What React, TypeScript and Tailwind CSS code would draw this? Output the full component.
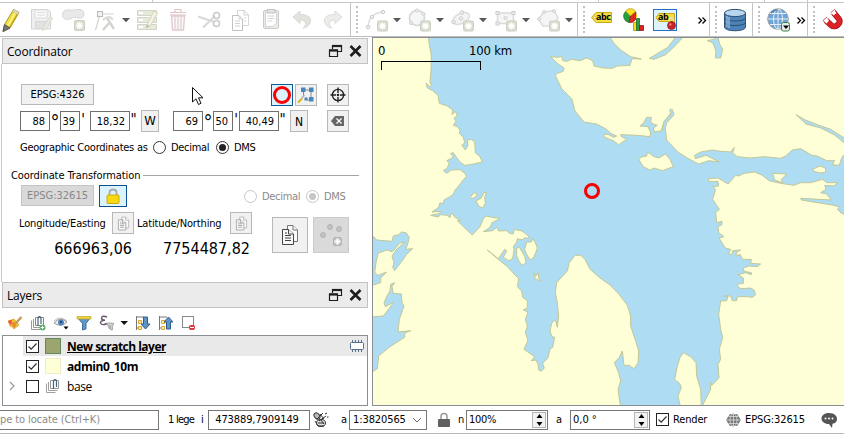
import React from "react";

type Kids = { children?: React.ReactNode };

/* ---------- small building blocks ---------- */

const Icon = ({ children, s = 24 }: Kids & { s?: number }) => (
  <svg className="shrink-0" width={s} height={s} viewBox={`0 0 ${s} ${s}`} fill="none">
    {children}
  </svg>
);

const Slot = ({ w, children }: Kids & { w: string }) => (
  <div className={`flex h-full shrink-0 items-center ${w}`}>{children}</div>
);

/* Tool that is disabled while no layer is being edited */
const Dim = ({ w, children }: Kids & { w: string }) => (
  <div className={`flex h-full shrink-0 items-center opacity-80 ${w}`}>{children}</div>
);

const Arrow = ({ w }: { w: string }) => (
  <Slot w={w}>
    <svg width="10" height="24" viewBox="0 0 10 24">
      <path d="M1 10H9L5 14.200Z" fill="#585858" />
    </svg>
  </Slot>
);

const Sep = ({ w }: { w: string }) => (
  <div className={`flex h-full shrink-0 items-center border-l border-[#c4c4c4] ${w}`}>
    <div className="ml-[5px] h-[27px] border-l-2 border-dotted border-[#c2c2c2]" />
  </div>
);

const More = ({ w }: { w: string }) => (
  <Slot w={w}>
    <svg width="10" height="24" viewBox="0 0 10 24" fill="none" stroke="#000" strokeWidth="1.300">
      <path d="M1.500 9.500L4.500 12.500L1.500 15.500M5.500 9.500L8.500 12.500L5.500 15.500" />
    </svg>
  </Slot>
);

/* "New feature" star badge shared by the digitizing icons */
const Badge = ({ x = 12.5, y = 13 }: { x?: number; y?: number }) => (
  <g transform={`translate(${x} ${y})`}>
    <rect x="0" y="0" width="10" height="10" rx="1.500" fill="#d0d6c6" stroke="#bdc5b2" />
    <path d="M5 1.500V8.500M1.500 5H8.500M2.600 2.600L7.400 7.400M7.400 2.600L2.600 7.400" stroke="#fff" strokeWidth="1.400" />
  </g>
);

/* ---------- top toolbar ---------- */

function Toolbar() {
  return (
    <div className="flex h-[37px] shrink-0 flex-col">
      <div className="flex h-[3px] border-b border-[#c8c8c8]">
        <div className="w-[153px] border-r border-[#c8c8c8]" />
        <div className="w-[446px] border-r border-[#c8c8c8]" />
        <div className="w-[166px] border-r border-[#c8c8c8]" />
        <div className="w-[43px] border-r border-[#c8c8c8]" />
      </div>
      <div className="flex h-[34px] items-center overflow-hidden border-b border-[#bdbdbd]">
        <Slot w="w-[30px]">
          <Icon>
            <path d="M3 23.500L4.500 16.500L13.500 1.500L19 4.500L10 20Z" fill="#f0dc3c" stroke="#a59a36" />
            <path d="M8 17.500L15.500 4.500" stroke="#fff27a" strokeWidth="2" />
            <path d="M10 19L17.500 6" stroke="#c0a51d" strokeWidth="1.500" />
            <path d="M3 23.500L4.500 16.500L10 20Z" fill="#777" stroke="#555" />
            <path d="M13.500 1.500L19 4.500L18 6.500L12.500 3.500Z" fill="#e8e4c0" stroke="#b4ae88" strokeWidth=".7" />
          </Icon>
        </Slot>
        <Dim w="w-[32px]">
          <Icon>
            <path d="M1.500 1.500H18L20.500 4V21H1.500Z" fill="#ececec" stroke="#cacaca" />
            <rect x="5" y="2" width="12" height="8" fill="#fafafa" stroke="#d4d4d4" />
            <path d="M7 4.500H15M7 7H15" stroke="#d4d4d4" />
            <rect x="5.500" y="13.500" width="10" height="7" fill="#dcdcdc" stroke="#cfcfcf" />
            <path d="M12.500 22.500L14 18L20 8.500L22.500 10L17 20Z" fill="#e6e6de" stroke="#cfcfc8" />
          </Icon>
        </Dim>
        <Dim w="w-[32px]">
          <Icon>
            <path d="M1 9C-1 4 3 1.500 7 2C11 3 14 1 18 1.500C23 2 23 9 19 10C15 11 13 8 10 10C7 12 2 12 1 9Z" fill="#e4e4e4" stroke="#cdcdcd" />
            <Badge x={12.5} y={12.5} />
          </Icon>
        </Dim>
        <Dim w="w-[27px]">
          <Icon>
            <path d="M1.500 22L6 6H20" stroke="#c6cbc2" strokeWidth="1.200" />
            <rect x="3.500" y="3.500" width="5" height="5" fill="#eee" stroke="#a8a8a8" />
            <path d="M9 22L16 14M13 10L20 21" stroke="#c9cdc4" strokeWidth="2.500" />
            <path d="M9 12Q15 6 19 12" stroke="#d3d3d3" strokeWidth="2" />
          </Icon>
        </Dim>
        <Arrow w="w-[14px]" />
        <Dim w="w-[33px]">
          <Icon>
            <g fill="#dfe5d3" stroke="#c6ccb9">
              <path d="M2.500 2.500H21.500V7.500H2.500ZM2.500 9.500H21.500V14.500H2.500ZM2.500 16.500H21.500V21.500H2.500Z" />
            </g>
            <path d="M8 5H4M8 12H4M8 19H4" stroke="#fff" strokeWidth="2" />
            <path d="M11 20L12.500 16L19 3L22.500 5L15.500 17.500Z" fill="#f4f1d8" stroke="#cdc9b4" />
            <path d="M11 20L12 16.500L15 18Z" fill="#aaa" />
          </Icon>
        </Dim>
        <Dim w="w-[30px]">
          <Icon>
            <path d="M7 4V1.500H13V4M2 4.500H18" stroke="#d9b6b8" strokeWidth="1.200" />
            <path d="M3.500 8H16.500L15.500 22H4.500Z" fill="#faf6f6" stroke="#d9bcbf" strokeWidth="1.300" />
            <path d="M7 9V21M10 9V21M13 9V21" stroke="#d8c4c6" strokeWidth="1.200" />
            <path d="M2 7H18" stroke="#d9bcbf" strokeWidth="1.200" />
          </Icon>
        </Dim>
        <Dim w="w-[32px]">
          <Icon>
            <path d="M0 8.500L16 14M5 19.500L17 8" stroke="#cfcfcf" strokeWidth="2" />
            <circle cx="18.500" cy="7.500" r="3" stroke="#bdbdbd" strokeWidth="1.500" />
            <circle cx="18.500" cy="15.500" r="3" stroke="#bdbdbd" strokeWidth="1.500" />
          </Icon>
        </Dim>
        <Dim w="w-[31px]">
          <Icon>
            <path d="M7.500 2.500H14L18.500 6.500V17.500H7.500Z" fill="#fff" stroke="#ccc" />
            <path d="M2.500 7.500H9L12.500 11V22.500H2.500Z" fill="#fff" stroke="#b4b4b4" />
            <path d="M9 7.500V11H12.500M14 3V7H18M5 13H10M5 15.500H10M5 18H10M14 10H16M14 13H16" stroke="#c6c6c6" />
          </Icon>
        </Dim>
        <Dim w="w-[31px]">
          <Icon>
            <rect x="2.500" y="2.500" width="15" height="18" rx="1.500" fill="#e8e8e0" stroke="#bfbfb7" />
            <path d="M4.500 4.500H15.500V15L12 18.500H4.500Z" fill="#fff" stroke="#c8c8c8" />
            <path d="M6 1.500H14V5H6Z" fill="#ddd" stroke="#b4b4b4" />
            <path d="M6.500 8H13.500M6.500 10.500H13.500M6.500 13H11" stroke="#ccc" />
          </Icon>
        </Dim>
        <Dim w="w-[31px]">
          <Icon>
            <path d="M1 9L8 3V6.500C15 6.500 19 9 18.500 13C18 17 15 19.500 11 20C15 17 15 12 8 12V15.500Z" fill="#dcdcd7" stroke="#cfcfc9" />
          </Icon>
        </Dim>
        <Dim w="w-[27px]">
          <Icon>
            <path d="M19 9L12 3V6.500C5 6.500 1 9 1.500 13C2 17 5 19.500 9 20C5 17 5 12 12 12V15.500Z" fill="#e9e9e5" stroke="#d0d5cc" />
          </Icon>
        </Dim>
        <Sep w="w-[15px]" />
        <Dim w="w-[27px]">
          <Icon>
            <path d="M3 19Q4 5 18 4" stroke="#d4d9d6" strokeWidth="1.500" />
            <g fill="#eee" stroke="#bdbdbd">
              <circle cx="3" cy="19" r="1.700" />
              <circle cx="7" cy="9" r="1.700" />
              <circle cx="18" cy="4" r="1.700" />
            </g>
            <Badge />
          </Icon>
        </Dim>
        <Arrow w="w-[16px]" />
        <Dim w="w-[27px]">
          <Icon>
            <circle cx="9" cy="10" r="7.500" fill="#f5f5f5" stroke="#d2d6d4" strokeWidth="2" />
            <g fill="#eee" stroke="#c4c4c4">
              <circle cx="9" cy="2.500" r="1.500" />
              <circle cx="3" cy="15" r="1.500" />
              <circle cx="15.500" cy="6" r="1.500" />
            </g>
            <Badge />
          </Icon>
        </Dim>
        <Arrow w="w-[16px]" />
        <Dim w="w-[27px]">
          <Icon>
            <ellipse cx="10" cy="10.500" rx="9" ry="5" transform="rotate(-25 10 10.500)" fill="#f1f1f1" stroke="#d2d6d4" strokeWidth="1.500" />
            <g fill="#eee" stroke="#bdbdbd">
              <circle cx="10" cy="10.500" r="1.700" />
              <circle cx="11" cy="4.500" r="1.700" />
              <circle cx="2.500" cy="14" r="1.700" />
            </g>
            <Badge />
          </Icon>
        </Dim>
        <Arrow w="w-[16px]" />
        <Dim w="w-[27px]">
          <Icon>
            <rect x="3.500" y="5" width="16" height="10.500" fill="#f3f3f3" stroke="#d0d5d2" strokeWidth="1.500" />
            <g fill="#eee" stroke="#c0c0c0">
              <rect x="2" y="3.500" width="3" height="3" />
              <rect x="18" y="3.500" width="3" height="3" />
              <rect x="2" y="14" width="3" height="3" />
              <circle cx="11.500" cy="10" r="1.500" />
            </g>
            <Badge />
          </Icon>
        </Dim>
        <Arrow w="w-[16px]" />
        <Dim w="w-[27px]">
          <Icon>
            <path d="M7 4L17 2.500L21 10L15 18H6L1.500 11Z" fill="#f3f3f3" stroke="#d2d6d4" strokeWidth="1.500" />
            <g fill="#eee" stroke="#c4c4c4">
              <circle cx="7" cy="4" r="1.500" />
              <circle cx="17" cy="3" r="1.500" />
              <circle cx="2" cy="11" r="1.500" />
            </g>
            <Badge />
          </Icon>
        </Dim>
        <Arrow w="w-[13px]" />
        <Sep w="w-[14px]" />
        <Slot w="w-[31px]">
          <div className="relative flex h-6 w-6 items-center">
            <svg width="24" height="24" viewBox="0 0 24 24">
              <path d="M.5 9.500L5 4.500H20.500V14.500H5Z" fill="#f6dc3f" stroke="#c8a915" />
              <circle cx="3.500" cy="9.500" r="1" fill="#fff" stroke="#b99b18" strokeWidth=".5" />
            </svg>
            <span className="absolute left-[5px] top-[3px] font-['Open_Sans',sans-serif] text-[9px] font-bold leading-[12px] tracking-[-0.5px] text-black">abc</span>
          </div>
        </Slot>
        <Slot w="w-[31px]">
          <Icon>
            <circle cx="8.500" cy="8" r="6.500" fill="#ffe426" />
            <path d="M8.500 8L3.500 3.500A6.500 6.500 0 0 0 7 14.500Z" fill="#1fa33b" stroke="#2d6c34" strokeWidth=".7" />
            <path d="M8.500 8L7 14.500A6.500 6.500 0 0 0 13.500 11.500L14 4Z" fill="#e12525" stroke="#8d1d1d" strokeWidth=".7" />
            <path d="M8.500 8L3.500 3A6.500 6.500 0 0 1 13.500 3Z" fill="#ffe426" stroke="#b99a14" strokeWidth=".8" />
            <path d="M11.500 14.500H14.500V22.500H11.500Z" fill="#f5e11f" stroke="#9f8c15" strokeWidth=".8" />
            <path d="M14.500 10.500H17.500V22.500H14.500Z" fill="#2f9c44" stroke="#226b31" strokeWidth=".8" />
            <path d="M17.500 17.500H21.500V22.500H17.500Z" fill="#de2222" stroke="#8d1616" strokeWidth=".8" />
          </Icon>
        </Slot>
        <Slot w="w-[44px]">
          <div className="relative h-[22px] w-6 border border-[#2371c9] bg-[#ddf2fb]">
            <svg width="22" height="20" viewBox="0 0 22 20">
              <path d="M2 7.500L5 3.500H20.500V11.500H5Z" fill="#f6dc3f" stroke="#c8a915" />
              <path d="M15.500 13V9.500Q17.500 6 19.500 9.500V14" fill="none" stroke="#ddd" strokeWidth="1.300" />
              <circle cx="17.500" cy="15.500" r="4" fill="#c92327" stroke="#8a1517" strokeWidth=".7" />
              <circle cx="16.300" cy="14.500" r="1.200" fill="#ee7c7d" />
            </svg>
            <span className="absolute left-[4px] top-px font-['Open_Sans',sans-serif] text-[9px] font-bold leading-[12px] tracking-[-0.5px] text-black">ab</span>
          </div>
        </Slot>
        <More w="w-[12px]" />
        <Sep w="w-[14px]" />
        <Slot w="w-[29px]">
          <Icon>
            <path d="M1.500 5V19C1.500 24 22.500 24 22.500 19V5Z" fill="#4e83b8" stroke="#2d5378" />
            <ellipse cx="12" cy="5" rx="10.500" ry="3.600" fill="#b9d4ec" stroke="#2d5378" />
            <path d="M1.500 10C1.500 14 22.500 14 22.500 10M1.500 14.500C1.500 18.500 22.500 18.500 22.500 14.500" stroke="#284d72" />
            <path d="M4 8V19M6 9V20" stroke="#8db3d8" strokeWidth="1.500" />
          </Icon>
        </Slot>
        <Sep w="w-[14px]" />
        <Slot w="w-[30px]">
          <Icon>
            <circle cx="12" cy="11" r="10.300" fill="#6ea5d6" stroke="#a0a0a0" />
            <ellipse cx="12" cy="11" rx="4.500" ry="10" stroke="#e7f1fa" />
            <path d="M12 1V21M2 11H22M4 5.500H20M4 16.500H20" stroke="#e7f1fa" />
            <path d="M5 5Q8 1.500 12 2" stroke="#5c88b4" strokeWidth="1.500" />
            <rect x="15.500" y="14.500" width="8" height="8.500" rx="2" fill="#e6efe4" stroke="#3d7b47" />
            <path d="M17 17.500H23L20 21Z" fill="#000" />
          </Icon>
        </Slot>
        <More w="w-[11px]" />
        <Sep w="w-[15px]" />
        <Slot w="w-[22px]">
          <Icon>
            <path d="M4 12.500L9.500 17.500C13 20.500 20 15 17 11L11.500 4.500" stroke="#9c1518" strokeWidth="6" />
            <path d="M4 12.500L9.500 17.500C13 20.500 20 15 17 11L11.500 4.500" stroke="#dc2228" strokeWidth="4.500" />
            <path d="M3 11.500L5.800 14M10.500 3.200L13 6.200" stroke="#fff" strokeWidth="4" />
            <path d="M5 9L1 12.500L3.500 15.500M8.500 5L12.500 1.500L15 4.500" stroke="#c33" strokeWidth=".8" />
          </Icon>
        </Slot>
      </div>
    </div>
  );
}

/* ---------- dock panels ---------- */

const DockTitle = ({ children }: Kids) => (
  <div className="ml-[2px] flex h-[26px] w-[366px] shrink-0 items-center border border-[#c3c3c3] bg-[#ebebeb] pl-1">
    <span className="flex-1 pt-px font-['Open_Sans',sans-serif] text-[12px] leading-4 tracking-[-0.2px]">{children}</span>
    <svg className="mr-1" width="36" height="16" viewBox="0 0 36 16" fill="none" stroke="#1e1e1e">
      <path d="M5.500 6V2.500H14.500V8.500H10" strokeWidth="1.200" />
      <path d="M5 3H15" strokeWidth="2.200" />
      <path d="M2.500 7H10.500V13.500H2.500Z" strokeWidth="1.200" fill="#ebebeb" />
      <path d="M2 7.500H11" strokeWidth="2.200" />
      <path d="M23.500 3L33.500 13M33.500 3L23.500 13" strokeWidth="2.600" />
    </svg>
  </div>
);

const Field = ({ w, children }: Kids & { w: string }) => (
  <div className={`flex h-[20px] shrink-0 items-center justify-end border border-[#6f6f6f] bg-white pr-[4px] pt-[2px] ${w}`}>{children}</div>
);

const Unit = ({ w, children }: Kids & { w: string }) => (
  <span className={`shrink-0 self-start text-center text-[15px] leading-[20px] ${w}`}>{children}</span>
);

const Degree = () => (
  <span className="flex w-[10px] shrink-0 justify-center self-start overflow-visible pt-[2px] text-[20px] leading-[20px]">°</span>
);

const Btn = ({ c, children }: Kids & { c: string }) => (
  <div className={`flex shrink-0 items-center justify-center border ${c}`}>{children}</div>
);

const Radio = ({ on, dim }: { on?: boolean; dim?: boolean }) => (
  <div className={`flex h-[13px] w-[13px] shrink-0 items-center justify-center rounded-full border bg-white ${dim ? "border-[#c6c6c6]" : "border-[#333]"}`}>
    {on && <div className={`h-[7px] w-[7px] rounded-full ${dim ? "bg-[#c6c6c6]" : "bg-[#222]"}`} />}
  </div>
);

const CopyGlyph = ({ s, dim }: { s: number; dim?: boolean }) => (
  <svg width={s} height={s} viewBox="0 0 20 22" fill="#f8f8f8" stroke={dim ? "#8e8e8e" : "#444"}>
    <path d="M7.500 1.500H13L17.500 6V17.500H7.500Z" stroke={dim ? "#a8a8a8" : "#777"} />
    <path d="M13 1.500V6H17.500" stroke={dim ? "#a8a8a8" : "#777"} />
    <path d="M2.500 5.500H8.500L13.500 10V20.500H2.500Z" />
    <path d="M8.500 5.500V10H13.500M5 11.500H11M5 14H11M5 16.500H11M5 9H7" />
  </svg>
);

const grey = "border-[#b8b8b8] bg-[#f1f1f1]";

function Coordinator() {
  return (
    <div className="ml-px flex h-[218px] w-[367px] shrink-0 flex-col border-l border-[#c9c9c9] text-[11px] leading-[14px]">
      <div className="relative ml-[19px] mt-[20px] flex h-[22px]">
        <Btn c={`h-[21px] w-[73px] ${grey}`}>
          <span className="pt-px tracking-[-0.1px]">EPSG:4326</span>
        </Btn>
        <svg className="absolute left-[170px] top-[2px]" width="14" height="20" viewBox="0 0 14 20">
          <path d="M1.500 1.500V16L5 12.800L7.500 18.500L10 17.300L7.500 11.800H12Z" fill="#fff" stroke="#111" />
        </svg>
        <Btn c="ml-[177px] h-[22px] w-[22px] border-[#0d5a9c] bg-[#dbf3fd]">
          <div className="h-[18px] w-[18px] rounded-full border-[3px] border-[#fa0000]" />
        </Btn>
        <Btn c={`ml-[2px] h-[22px] w-[22px] ${grey}`}>
          <svg width="18" height="18" viewBox="0 0 18 18" fill="#4785bd">
            <path d="M6 4H14M14 4.500V14M10 14H14M6.500 5V11" fill="none" stroke="#888" />
            <path d="M4 1.500H8.500V6H4ZM12 1.500H16.500V6H12ZM12 11H16.500V15.500H12ZM7.500 11.500H10.500V14.500H7.500Z" />
            <path d="M1 16.500L5 12.500" stroke="#d9b31e" strokeWidth="2" />
            <path d="M4.500 12.500L7.500 9" stroke="#b5b5b5" strokeWidth="1.500" />
          </svg>
        </Btn>
        <Btn c={`ml-[10px] h-[22px] w-[22px] ${grey}`}>
          <svg width="18" height="18" viewBox="0 0 18 18" fill="none" stroke="#222" strokeWidth="1.400">
            <circle cx="9" cy="9" r="5.600" />
            <path d="M9 1.500V7M9 11V16.500M1.500 9H7M11 9H16.500" />
            <circle cx="9" cy="9" r=".6" />
          </svg>
        </Btn>
      </div>
      <div className="ml-[18px] mt-[4px] flex h-[22px] items-center">
        <Field w="w-[30px]">88</Field>
        <Degree />
        <Field w="w-[20px]">39</Field>
        <Unit w="w-[10px] pr-1">'</Unit>
        <Field w="w-[40px]">18,32</Field>
        <Unit w="w-[11px] pr-1">"</Unit>
        <Btn c={`h-[22px] w-[18px] text-[13px] ${grey}`}>W</Btn>
        <div className="w-[14px]" />
        <Field w="w-[30px]">69</Field>
        <Degree />
        <Field w="w-[20px]">50</Field>
        <Unit w="w-[6px]">'</Unit>
        <Field w="w-[40px]">40,49</Field>
        <Unit w="w-[11px] pr-1">"</Unit>
        <Btn c={`h-[22px] w-[18px] pt-px text-[12px] ${grey}`}>N</Btn>
        <Btn c={`ml-[19px] h-[22px] w-[22px] ${grey}`}>
          <svg width="14" height="12" viewBox="0 0 14 12">
            <path d="M0 6L4 1H13V11H4Z" fill="#666" />
            <path d="M5.500 3.500L10.500 8.500M10.500 3.500L5.500 8.500" stroke="#fff" strokeWidth="1.200" />
          </svg>
        </Btn>
      </div>
      <div className="ml-[18px] mt-[7px] flex h-[16px] items-center">
        <span className="w-[133px] whitespace-nowrap pt-[2px] tracking-[-0.25px]">Geographic Coordinates as</span>
        <Radio />
        <span className="ml-[5px] w-[45px] pt-[2px] tracking-[-0.3px]">Decimal</span>
        <Radio on />
        <span className="ml-[5px] pt-[2px] tracking-[-0.3px]">DMS</span>
      </div>
      <div className="ml-[9px] mt-[12px] flex h-[16px] items-center">
        <span className="w-[132px] whitespace-nowrap pt-[2px] tracking-[-0.08px]">Coordinate Transformation</span>
        <div className="h-px w-[216px] bg-[#a5a5a5]" />
      </div>
      <div className="ml-[19px] mt-[2px] flex h-[22px]">
        <Btn c="h-[21px] w-[73px] border-[#c4c4c4] bg-[#d9d9d9] text-[#888]">
          <span className="pt-px">EPSG:32615</span>
        </Btn>
        <Btn c="ml-[5px] h-[22px] w-[28px] border-[#0d4f8f] bg-[#dbf3fd]">
          <svg width="14" height="16" viewBox="0 0 14 16">
            <path d="M3.500 8V4.500Q3.500 1.500 7 1.500Q10.500 1.500 10.500 4.500V8" fill="none" stroke="#aaa" strokeWidth="1.800" />
            <rect x="1" y="7" width="12" height="8.500" rx="1" fill="#f8d90f" stroke="#ccab09" />
          </svg>
        </Btn>
        <div className="ml-[117px] flex items-center text-[#8a8a8a]">
          <Radio dim />
          <span className="ml-[5px] w-[44px] pt-[2px] tracking-[-0.3px]">Decimal</span>
          <Radio on dim />
          <span className="ml-[5px] pt-[2px] tracking-[-0.3px]">DMS</span>
        </div>
      </div>
      <div className="flex">
        <div className="flex w-[270px] flex-col">
          <div className="ml-[17px] mt-[5px] flex h-[22px] items-center">
            <span className="w-[93px] whitespace-nowrap pt-[2px] tracking-[-0.15px]">Longitude/Easting</span>
            <Btn c={`h-[22px] w-[22px] ${grey}`}><CopyGlyph s={15} dim /></Btn>
            <span className="ml-[3px] w-[93px] whitespace-nowrap pt-[2px] tracking-[-0.15px]">Latitude/Northing</span>
            <Btn c={`h-[22px] w-[22px] ${grey}`}><CopyGlyph s={15} dim /></Btn>
          </div>
          <div className="mt-[4px] flex h-[20px] items-center whitespace-nowrap text-[16px] leading-5">
            <span className="w-[130px] pt-px text-right">666963,06</span>
            <span className="w-[118px] pt-px text-right">7754487,82</span>
          </div>
        </div>
        <Btn c={`mt-[10px] h-[36px] w-[36px] ${grey}`}><CopyGlyph s={22} /></Btn>
        <Btn c="ml-[5px] mt-[10px] h-[36px] w-[36px] border-[#cbcbcb] bg-[#dadada]">
          <svg width="34" height="34" viewBox="0 0 34 34" fill="#c2c2c2" stroke="#b4b4b4">
            <circle cx="16" cy="9" r="2.500" />
            <circle cx="25" cy="11" r="2.500" />
            <circle cx="9" cy="17" r="2.500" />
            <rect x="19.500" y="19.500" width="8" height="8" rx="1.500" />
            <path d="M23.500 20.500V26.500M20.500 23.500H26.500" stroke="#fff" strokeWidth="2.200" />
          </svg>
        </Btn>
      </div>
    </div>
  );
}

const Check = ({ on }: { on?: boolean }) => (
  <div className="h-[13px] w-[13px] shrink-0 border border-[#222] bg-white">
    {on && (
      <svg className="block" width="11" height="11" viewBox="0 0 11 11" fill="none" stroke="#333" strokeWidth="1.200">
        <path d="M1.500 5.500L4.200 8.200L9.500 2.500" />
      </svg>
    )}
  </div>
);

const Group = () => (
  <Icon s={16}>
    <path d="M1.500 5.500V14.500H10.500M3.500 4V12.500H12.500" stroke="#a0a0a0" />
    <path d="M5.500 2.500H13.500V10.500H5.500Z" stroke="#999" />
    <path d="M8.500 11V4Q8.500 1.500 10 1.500T11.500 4V9" stroke="#45657e" strokeWidth="1.200" />
  </Icon>
);

function Layers() {
  return (
    <>
      <div className="ml-[7px] flex h-[27px] shrink-0 items-center pt-[2px]">
        <Slot w="w-[23px]">
          <Icon s={16}>
            <path d="M1 6L7 4L12 10L7 14Q5 11 3 11Z" fill="#f2c230" stroke="#c78b1c" strokeWidth=".6" />
            <path d="M1 6L5 5L4 10Z" fill="#e44" />
            <path d="M4 8L7 7L9 11L7 13Z" fill="#e9862a" />
            <path d="M8 9L14.500 2" stroke="#c79a55" strokeWidth="2.500" />
          </Icon>
        </Slot>
        <Slot w="w-[23px]">
          <Icon s={16}>
            <path d="M1.500 5.500V14.500H10M3.500 4V12.500H12" stroke="#999" />
            <path d="M5.500 2.500H13.500V10.500H5.500Z" stroke="#888" />
            <path d="M8 11V4Q8 1.500 9.500 1.500T11 4V9" stroke="#45657e" strokeWidth="1.200" />
            <circle cx="12.500" cy="12.500" r="3" fill="#5fae65" />
            <path d="M12.500 10.800V14.200M10.800 12.500H14.200" stroke="#fff" />
          </Icon>
        </Slot>
        <Slot w="w-[23px]">
          <Icon s={16}>
            <path d="M1 8Q7 1 14 7Q8 13 1 8Z" fill="#eee" stroke="#999" />
            <path d="M1 6Q7 0 14 6" stroke="#bbb" />
            <circle cx="8" cy="7.500" r="3" fill="#4e86bd" />
            <circle cx="8" cy="7" r="1" fill="#16324d" />
            <path d="M10.500 11.500H15.500L13 14.500Z" fill="#000" />
          </Icon>
        </Slot>
        <Slot w="w-[22px]">
          <Icon s={16}>
            <path d="M1.500 2.500H14.500L10 8.500V14L6.500 15V8.500Z" fill="#6297c8" stroke="#42719c" />
            <path d="M1 1.500H15V4H1Z" fill="#f1d33c" stroke="#b99f24" strokeWidth=".6" />
          </Icon>
        </Slot>
        <Slot w="w-[22px]">
          <Icon s={18}>
            <path d="M9 3Q4 1 3.500 4Q3.500 6 7 6.200Q2.500 6 2.500 9Q4 12 9 9.500" stroke="#67566a" strokeWidth="1.400" />
            <path d="M9 9H15.500V11L14.500 12V16H12.500V12H11.500V15L10 12Z" fill="#ccc" stroke="#999" strokeWidth=".7" />
          </Icon>
        </Slot>
        <Slot w="w-[15px]">
          <svg width="9" height="16" viewBox="0 0 9 16"><path d="M.5 6H8L4.200 10Z" fill="#111" /></svg>
        </Slot>
        <Slot w="w-[23px]">
          <Icon s={16}>
            <path d="M1.500 1V15M1.500 2H9M1.500 13H5" stroke="#777" />
            <path d="M3.500 5.500H6.500V8.500H3.500ZM3.500 11.500H6.500V14.500H3.500Z" fill="#ffe9a6" stroke="#e0a92e" />
            <path d="M8.500 2H12.500V9H15L10.500 14L6 9H8.500Z" fill="#5f94c5" stroke="#2f5f8f" />
          </Icon>
        </Slot>
        <Slot w="w-[23px]">
          <Icon s={16}>
            <path d="M1.500 1V15M1.500 2H9M1.500 13H5" stroke="#777" />
            <path d="M3.500 5.500H6.500V8.500H3.500ZM3.500 11.500H6.500V14.500H3.500Z" fill="#ffe9a6" stroke="#e0a92e" />
            <path d="M8.500 14H12.500V7H15L10.500 2L6 7H8.500Z" fill="#5f94c5" stroke="#2f5f8f" />
          </Icon>
        </Slot>
        <Icon s={16}>
          <rect x="1.500" y="1.500" width="11" height="11" stroke="#888" fill="#fff" />
          <rect x="8" y="10" width="6" height="5" rx="2" fill="#e0353f" />
          <path d="M9 12.500H13" stroke="#fff" />
        </Icon>
      </div>
      <div className="ml-[2px] flex h-[71px] w-[366px] shrink-0 flex-col border border-[#8b8f94] bg-white font-['Open_Sans',sans-serif] text-[12px] leading-4">
        <div className="ml-[20px] flex h-[20px] items-center bg-[#e9e9e9] pl-[3px]">
          <Check on />
          <div className="ml-[6px] h-4 w-4 border border-[#628a5f] bg-[#9ba56d]" />
          <span className="ml-[6px] flex-1 pt-[2px] font-bold tracking-[-0.52px] underline underline-offset-1">New scratch layer</span>
          <svg className="mr-[2px]" width="16" height="14" viewBox="0 0 16 14" fill="none" stroke="#54708c">
            <rect x="1.500" y="3.500" width="13" height="7" rx="1" fill="#fff" />
            <path d="M3.500 1V3M6.500 1V3M9.500 1V3M12.500 1V3M3.500 11V13M6.500 11V13M9.500 11V13M12.500 11V13" />
          </svg>
        </div>
        <div className="ml-[23px] flex h-[20px] items-center">
          <Check on />
          <div className="ml-[6px] h-4 w-4 border border-[#eeeec8] bg-[#feffd6]" />
          <span className="ml-[6px] pt-[2px] font-bold tracking-[-0.45px]">admin0_10m</span>
        </div>
        <div className="ml-[6px] flex h-[20px] items-center">
          <svg width="7" height="10" viewBox="0 0 7 10"><path d="M1 1L5 5L1 9" fill="none" stroke="#999" strokeWidth="1.200" /></svg>
          <div className="ml-[10px]"><Check /></div>
          <div className="ml-[6px]"><Group /></div>
          <span className="ml-[6px] pt-[2px] tracking-[-0.4px]">base</span>
        </div>
      </div>
    </>
  );
}

/* ---------- map canvas ---------- */

function MapCanvas() {
  return (
    <div className="relative min-w-0 flex-1 overflow-hidden border-b border-l border-t border-[#8a8d92] bg-[#aedcf3]">
      <svg className="block" width="471" height="367" viewBox="9 6 1413 1101" strokeWidth="3" strokeLinejoin="round">
        <g fill="#feffd6" stroke="#c2c798">
          {/* western mainland and the southern cape */}
          <path d="M0 0H175L177 20L184 60L183 100L180 140L185 148L180 152L168 142L172 156L188 164L204 178L208 202L232 210L248 222L246 236L256 226L262 240L252 246L258 256L250 268L262 272L270 282L268 292L280 304L284 320L276 328L286 342L294 328L292 312L304 310L314 318L316 350L330 362L337 378L310 384L284 388L270 378L258 362L250 350L242 352L250 364L230 374L238 380L232 396L220 404L230 412L244 402L270 401L285 412L289 422L276 436L266 450L254 464L250 474L240 482L222 492L220 504L210 500L205 515L186 528L212 526L208 533L182 538L205 543L212 536L232 538L240 545L244 530L256 545L272 552L262 554L280 572L307 597L330 572L340 548L348 540L372 545L388 546L378 554L366 560L360 574L340 587L368 584L380 574L386 585L410 584L418 592L430 594L432 580L456 585L470 596L480 606L462 606L456 612L442 608L440 618L430 632L432 640L428 668L416 674L400 664L410 645L404 640L385 668L352 642L380 666L410 690L446 728L442 752L455 765L458 784L472 794L472 815L460 822L474 828L466 850L472 870L466 890L474 912L462 940L494 962L484 974L498 972L504 984L506 1002L514 1006L523 996L518 982L534 965L540 938L548 934L554 904L546 902L540 885L545 862L556 850L562 874L566 840L562 800L556 770L560 740L578 720L592 705L598 680L615 658L632 658L645 670L660 700L690 726L720 747L747 775L772 808L782 840L782 870L797 915L806 945L804 980L792 998L777 988L762 988L757 945L747 965L733 980L746 1010L752 1035L744 1060L752 1115H0Z" />
          <path d="M302 482L312 470L322 474L316 484L304 488Z" />
          <path d="M318 495L334 486L342 470L350 468L344 484L346 502L338 516L326 510Z" />
          <path d="M464 640L470 618L484 618L488 608L496 620L502 636L492 664L480 672L470 655Z" />
          <path d="M440 660L440 636L448 634L464 660L468 680L456 688L446 674Z" />
          <path d="M492 712L498 720L505 710L506 726L512 736L496 728Z" />
        </g>
        <g fill="#feffd6" stroke="#c2c798">
          {/* northern land from the strait to the eastern edge */}
          <path d="M542 62L560 64L576 62L578 74L592 76L604 70L630 74L650 66L668 74L672 90L700 96L727 97L742 90L780 88L786 68L814 69L782 62L752 42L732 22L718 0H1432V364L1420 358L1414 368L1408 388L1386 386L1394 374L1370 374L1342 360L1326 358L1292 338L1267 342L1247 360L1232 367L1182 362L1142 366L1102 362L1088 350L1093 334L1082 348L1052 346L1027 342L992 348L974 358L976 368L1008 358L1048 378L1017 374L986 384L952 366L924 348L890 312L886 280L888 260L910 232L902 218L904 230L882 258L874 284L854 288L850 276L862 268L850 264L842 258L844 244L830 244L820 262L810 270L834 272L842 290L840 302L802 298L752 296L754 302L770 310L746 326L730 314L714 308L702 302L702 294L716 296L732 304L740 300L722 292L710 280L680 264L642 258L615 225L606 190L575 158L556 118L562 112L580 106L582 96L562 82Z" />
          {/* eastern mainland */}
          <path d="M1016 428L1044 426L1074 444L1092 424L1096 418L1106 420L1122 412L1154 408L1177 418L1197 434L1232 442L1272 448L1292 440L1322 440L1357 430L1370 440L1402 440L1392 450L1364 448L1368 460L1352 470L1370 474L1384 492L1292 487L1294 492L1392 508L1410 514L1402 520L1414 532L1432 538V1115H994L1012 1080L1022 1060V1040L1026 1048L1047 1025L1044 985L1052 970L1048 940L1058 905L1052 880L1046 835L1052 795L1070 794L1074 782L1060 780L1082 780L1087 794L1100 794L1102 782L1132 782L1147 784L1157 776L1152 762L1142 756L1112 758L1102 750L1104 744L1120 742V726L1104 716L1127 710L1144 716V710L1122 706L1120 696L1137 690L1162 692L1172 684L1142 682L1144 670L1118 670L1110 655L1098 660L1100 648L1112 642L1088 644L1086 656L1076 654L1082 640L1066 636L1047 606L1062 602L1046 590L1044 572L1056 566V556L1040 560L1037 530L1048 520L1028 490L1037 460L1028 452L1046 450L1044 436H1016Z" />
          <path d="M806 370L816 362L830 360L832 348L852 362L867 366L886 354L900 370L910 392L877 404L852 396L840 402L820 392Z" />
          <path d="M1208 412L1250 414L1234 430L1238 440L1214 432Z" />
          <path d="M1328 400L1350 390L1366 396L1368 408L1350 411L1332 406Z" />
          <path d="M932 1115L924 1080L934 1055L930 1044L914 1030L922 990L930 965L940 950L962 962L978 980L980 1020L992 1060L994 1115Z" />
        </g>
        <g fill="#aedcf3" stroke="#c2c798">
          {/* bays and channels cut into the land */}
          <path d="M0 590L20 612L66 616L70 600L86 596L94 588L108 590L118 604L112 628L106 640L128 638L110 655L100 670L74 704L68 694L72 680L66 660L78 642L104 618L88 622L76 638L66 647L50 642L24 652L18 680L14 710L24 718L50 708L32 726V740L0 750Z" />
          <path d="M0 843L40 840L72 798L46 812L42 800L52 778L60 765L62 745L74 740L66 752L70 772L94 774L96 800L102 810L88 850L84 888L122 884L104 892V904L60 932L26 960L22 998L0 1012Z" />
          <path d="M920 0L892 35L838 67L852 70L887 56L917 28L942 0Z" />
          <path d="M1012 14L1030 10L1044 0L1048 22L1058 40L1052 66L1036 66L1038 45L1028 20Z" />
          <path d="M1278 236L1306 252L1342 266L1382 280L1432 312V328L1392 296L1352 276L1308 264Z" />
          <path d="M902 220L908 235L886 258L880 284" fill="none" stroke="#c2c798" strokeWidth="11" />
          <path d="M902 220L908 235L886 258L880 292" fill="none" stroke="#aedcf3" strokeWidth="6" />
        </g>
      </svg>
      <div className="absolute left-[5px] top-[5px] flex w-[134px] justify-between text-[13px] leading-[16px] tracking-[-0.2px] text-black">
        <span>0</span>
        <span>100 km</span>
      </div>
      <div className="absolute left-[8px] top-[23px] h-[9px] w-[100px] border-x border-t border-black" />
      <div className="absolute left-[211px] top-[145px] h-4 w-4 rounded-full border-[3px] border-[#f80000]" />
    </div>
  );
}

/* ---------- status bar ---------- */

const box = "flex h-[20px] shrink-0 items-center border border-[#777] bg-white pt-px";

const Spin = () => (
  <div className="mb-px mr-px flex h-[16px] w-[14px] flex-col items-center justify-between border border-[#b5b5b5] bg-[#f3f3f3] py-[1px]">
    <svg width="7" height="5" viewBox="0 0 7 5"><path d="M3.500 0L6.500 4H.5Z" /></svg>
    <svg width="7" height="5" viewBox="0 0 7 5"><path d="M3.500 5L6.500 1H.5Z" /></svg>
  </div>
);

function StatusBar() {
  return (
    <div className="flex h-[28px] shrink-0 items-center overflow-hidden whitespace-nowrap border-b border-[#b8b8b8] text-[11px] leading-[14px]">
      <div className={`${box} w-[159px] border-l-0 text-[#8b8b8b]`}>
        <span className="tracking-[-0.1px]">pe to locate (Ctrl+K)</span>
      </div>
      <span className="ml-[9px] w-[26px] shrink-0 pt-px tracking-[-0.75px]">1 lege</span>
      <span className="ml-[7px] w-[7px] shrink-0 pt-px">i</span>
      <div className={`${box} w-[102px] justify-center pr-1 tracking-[-0.1px]`}>473889,7909149</div>
      <div className="ml-[2px]">
        <Icon s={18}>
          <g stroke="#333">
            <ellipse cx="5" cy="5" rx="2.500" ry="3.500" transform="rotate(-40 5 5)" fill="#bbb" />
            <ellipse cx="9" cy="12" rx="4.500" ry="3.500" fill="#ddd" />
            <path d="M5 8L11 2M7 10L14 5M3 10L6 15L12 15M9 9L12 13M8 3L12 8M6 12H12M13 3L15 2M15 6H16.500" />
          </g>
        </Icon>
      </div>
      <span className="ml-[11px] w-[7px] shrink-0 pt-px">a</span>
      <div className={`${box} ml-px w-[78px] pl-[3px]`}>
        <span className="flex-1 tracking-[-0.1px]">1:3820565</span>
        <svg className="mr-1" width="10" height="7" viewBox="0 0 10 7"><path d="M1 1L5 5L9 1" fill="none" stroke="#666" /></svg>
      </div>
      <svg className="ml-[11px] shrink-0" width="12" height="16" viewBox="0 0 12 16">
        <path d="M3 8V4.500Q3 1.500 6 1.500T9 4.500V8" fill="none" stroke="#999" strokeWidth="1.500" />
        <rect x="0" y="7" width="12" height="8" rx="1" fill="#606060" />
      </svg>
      <span className="ml-[8px] w-[7px] shrink-0 pt-px">n</span>
      <div className={`${box} ml-px w-[82px] pl-[2px]`}><span className="flex-1 tracking-[-0.3px]">100%</span><Spin /></div>
      <span className="ml-[8px] w-[7px] shrink-0 pt-px">a</span>
      <div className={`${box} ml-[7px] w-[80px] pl-[2px]`}><span className="flex-1">0,0 °</span><Spin /></div>
      <div className="ml-[6px]"><Check on /></div>
      <span className="ml-[4px] w-[53px] shrink-0 pt-px tracking-[-0.15px]">Render</span>
      <Icon s={16}>
        <path d="M4 2H11L15 8L11 14H4L0 8Z" fill="#777" />
        <path d="M7.500 1V15M0 8H15M2.500 4.500H12.500M2.500 11.500H12.500" stroke="#ddd" strokeWidth=".8" />
        <ellipse cx="7.500" cy="8" rx="3.500" ry="6.500" stroke="#ddd" strokeWidth=".8" />
      </Icon>
      <span className="ml-[3px] w-[75px] shrink-0 pt-px tracking-[-0.1px]">EPSG:32615</span>
      <Icon s={18}>
        <path d="M9 2C19 2 19 12 12.500 12.800L12 17L9 13C-1 13-1 2 9 2Z" fill="#555" />
        <circle cx="5.500" cy="7.500" r="1" fill="#fff" />
        <circle cx="9" cy="7.500" r="1" fill="#fff" />
        <circle cx="12.500" cy="7.500" r="1" fill="#fff" />
      </Icon>
    </div>
  );
}

export default function App() {
  return (
    <div className="flex h-[434px] w-[844px] flex-col overflow-hidden bg-white font-['DejaVu_Sans_Condensed','DejaVu_Sans',sans-serif] text-black">
      <Toolbar />
      <div className="flex h-[369px] shrink-0">
        <div className="flex w-[372px] shrink-0 flex-col pt-px">
          <DockTitle>Coordinator</DockTitle>
          <Coordinator />
          <DockTitle>Layers</DockTitle>
          <Layers />
        </div>
        <MapCanvas />
      </div>
      <StatusBar />
    </div>
  );
}
